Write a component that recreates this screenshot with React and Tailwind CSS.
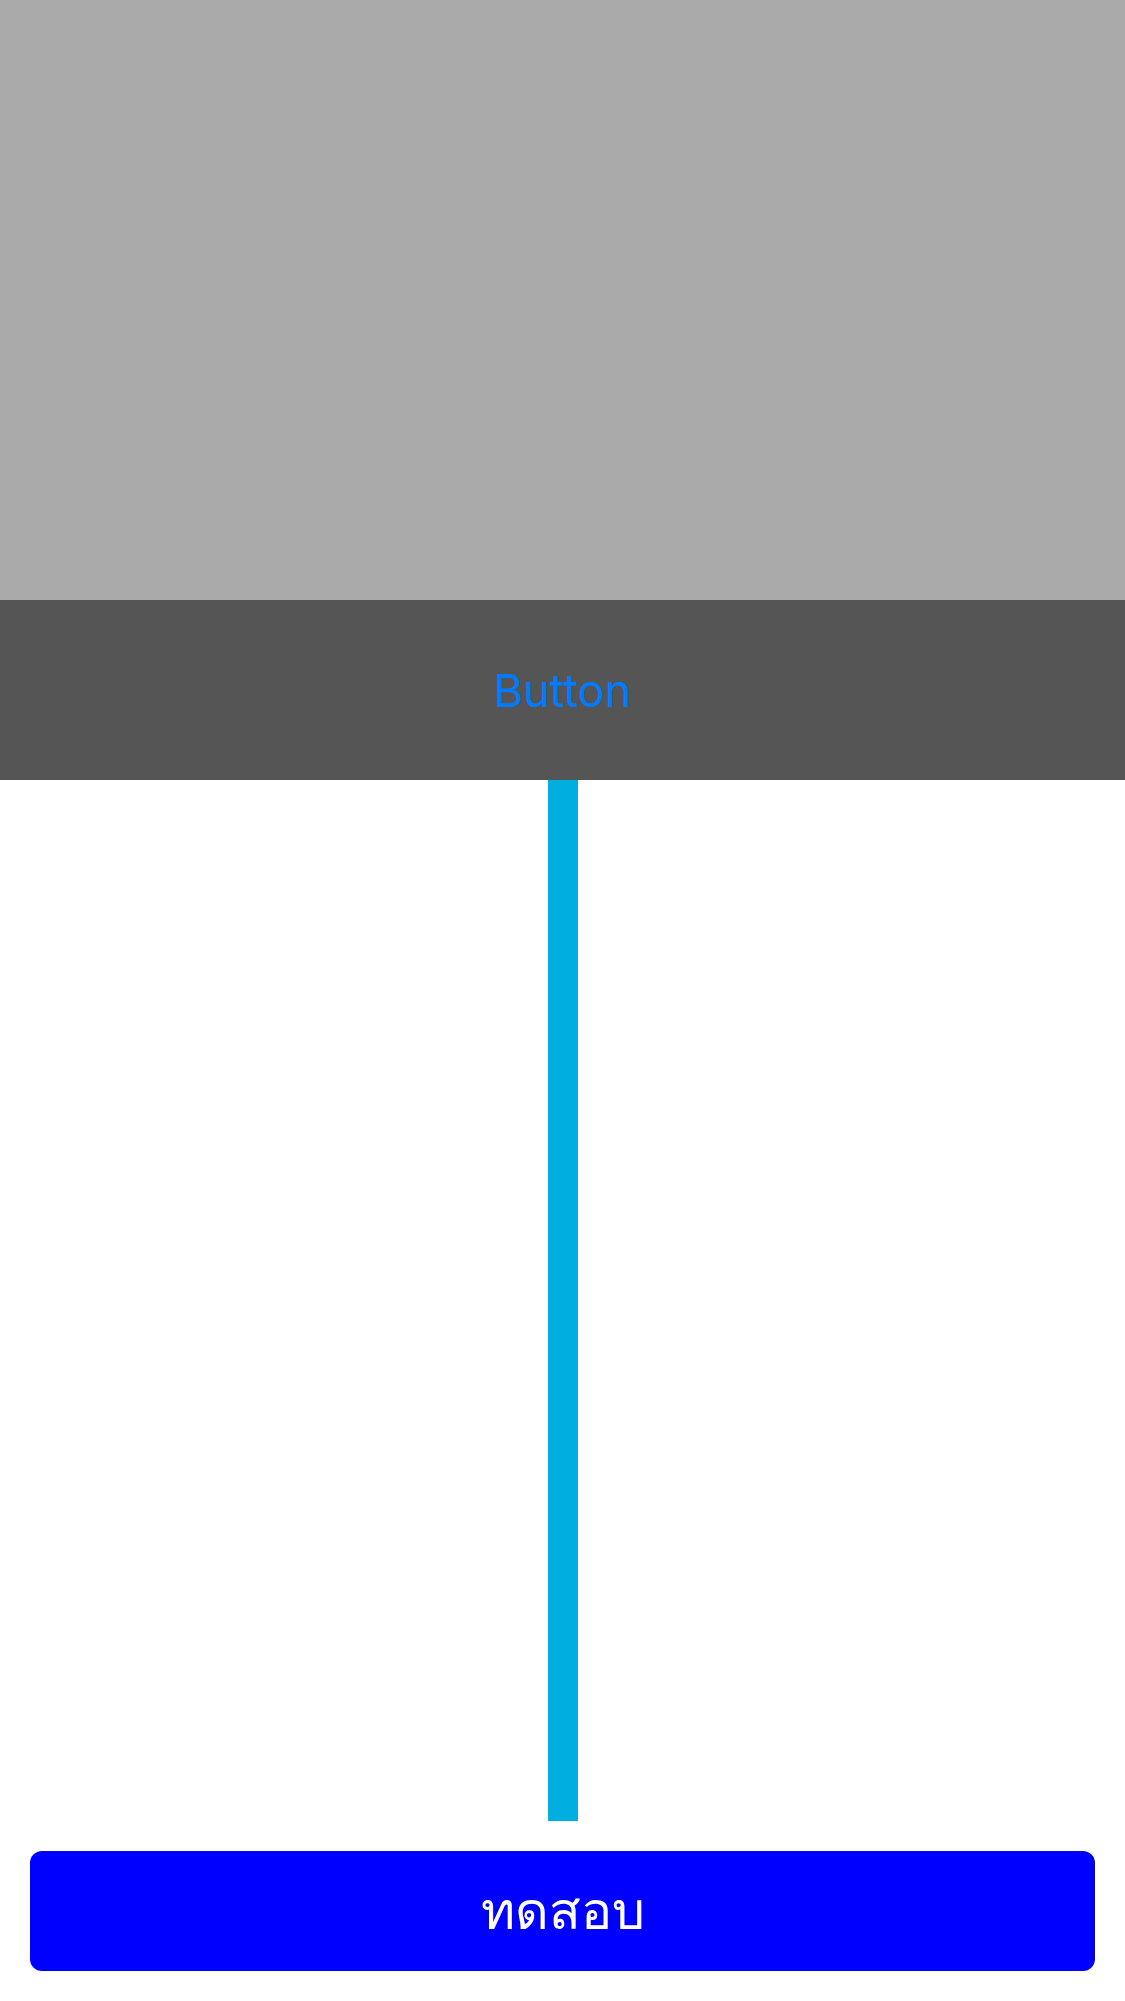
import React from 'react';

export default function App() {
  return (
    <div className="w-[1125px] h-[2001px] bg-white flex flex-col font-['Inter',sans-serif]">
      <div className="h-[600px] bg-[#aaaaaa]" />
      <div className="h-[180px] bg-[#555555] flex items-center justify-center">
        <button className="text-[#007aff] text-[45px] leading-none">Button</button>
      </div>
      <div className="flex-1 flex justify-center">
        <div className="w-[30px] h-full bg-[#00aee0]" />
      </div>
      <div className="p-[30px]">
        <button className="w-full h-[120px] rounded-[12px] bg-[#0000ff] text-white text-[52px] leading-none flex items-center justify-center font-['DejaVu_Sans',monospace]">
          ทดสอบ
        </button>
      </div>
    </div>
  );
}
